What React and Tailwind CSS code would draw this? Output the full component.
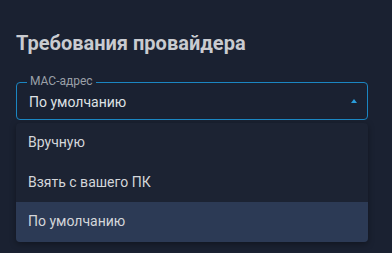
import { useState } from 'react'

const options = ['Вручную', 'Взять с вашего ПК', 'По умолчанию']

export default function App() {
  const [value, setValue] = useState('По умолчанию')

  return (
    <div
      className="h-[253px] w-[392px] overflow-hidden bg-[#1a2131] pl-4 pr-6 pt-[29px] text-[#d4d6da]"
      style={{ fontFamily: 'Roboto, "Noto Sans", sans-serif' }}
    >
      <h2 className="text-[20px] font-bold leading-[28px] text-[#c9cbd0]">Требования провайдера</h2>

      <div className="relative mt-[25px] flex h-[38px] items-center rounded-[4px] border border-[#1b86c2] pl-3 pr-3">
        <span className="absolute -top-[9px] left-[10px] bg-[#1a2131] px-[3px] text-[12px] leading-[15px] text-[#9aa0a8]">
          MAC-адрес
        </span>
        <span className="flex-1 pt-[2px] text-[14px] text-[#dfe1e4]">{value}</span>
        <svg width="6" height="4" viewBox="0 0 6 4" className="mr-[-2px]">
          <path d="M3 0 L6 4 L0 4 Z" fill="#2a9ddb" />
        </svg>
      </div>

      <ul className="mt-[3px] overflow-hidden rounded-[4px] bg-[#1c2333] shadow-[0_2px_6px_rgba(0,0,0,0.35)]">
        {options.map((opt) => (
          <li
            key={opt}
            onClick={() => setValue(opt)}
            className={`flex h-[39.5px] items-center px-3 text-[14px] text-[#d4d6da] ${
              opt === value ? 'bg-[#2c3a55]' : ''
            }`}
          >
            {opt}
          </li>
        ))}
      </ul>
    </div>
  )
}
